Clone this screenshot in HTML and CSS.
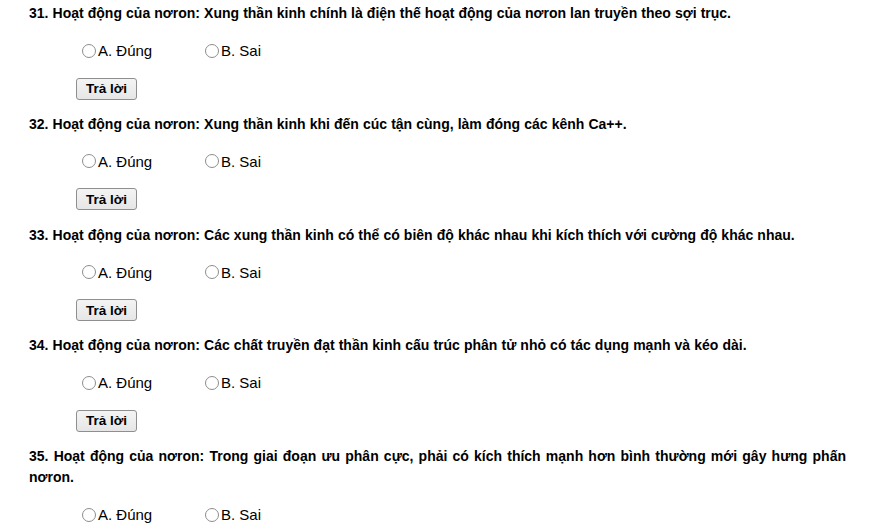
FILE: index.html
```html
<!DOCTYPE html>
<html lang="vi">
<head>
<meta charset="utf-8">
<title>Quiz</title>
<link rel="stylesheet" href="styles.css">
</head>
<body>
<div class="quiz">
  <section class="item">
    <p class="question">31. Hoạt động của nơron: Xung thần kinh chính là điện thế hoạt động của nơron lan truyền theo sợi trục.</p>
    <div class="options">
      <label class="option"><span class="radio"></span>A. Đúng</label>
      <label class="option"><span class="radio"></span>B. Sai</label>
    </div>
    <button class="answer">Trả lời</button>
  </section>
  <section class="item">
    <p class="question">32. Hoạt động của nơron: Xung thần kinh khi đến cúc tận cùng, làm đóng các kênh Ca++.</p>
    <div class="options">
      <label class="option"><span class="radio"></span>A. Đúng</label>
      <label class="option"><span class="radio"></span>B. Sai</label>
    </div>
    <button class="answer">Trả lời</button>
  </section>
  <section class="item">
    <p class="question">33. Hoạt động của nơron: Các xung thần kinh có thể có biên độ khác nhau khi kích thích với cường độ khác nhau.</p>
    <div class="options">
      <label class="option"><span class="radio"></span>A. Đúng</label>
      <label class="option"><span class="radio"></span>B. Sai</label>
    </div>
    <button class="answer">Trả lời</button>
  </section>
  <section class="item">
    <p class="question">34. Hoạt động của nơron: Các chất truyền đạt thần kinh cấu trúc phân tử nhỏ có tác dụng mạnh và kéo dài.</p>
    <div class="options">
      <label class="option"><span class="radio"></span>A. Đúng</label>
      <label class="option"><span class="radio"></span>B. Sai</label>
    </div>
    <button class="answer">Trả lời</button>
  </section>
  <section class="item">
    <p class="question">35. Hoạt động của nơron: Trong giai đoạn ưu phân cực, phải có kích thích mạnh hơn bình thường mới gây hưng phấn nơron.</p>
    <div class="options">
      <label class="option"><span class="radio"></span>A. Đúng</label>
      <label class="option"><span class="radio"></span>B. Sai</label>
    </div>
    <button class="answer">Trả lời</button>
  </section>
</div>
</body>
</html>
```
FILE: styles.css
```css
html, body {
  margin: 0;
  padding: 0;
  background: #ffffff;
}
body {
  font-family: "Liberation Sans", Arial, sans-serif;
  color: #000000;
}
.quiz {
  padding: 3px 26px 0 29px;
}
.item {
  display: flex;
  flex-direction: column;
  align-items: flex-start;
  margin-bottom: 14.25px;
}
.question {
  margin: 0;
  width: 100%;
  font-size: 14px;
  font-weight: bold;
  line-height: 21px;
  word-spacing: 0.2px;
  text-align: justify;
}
.options {
  display: flex;
  margin-top: 16.5px;
  padding-left: 53px;
  height: 20px;
  align-items: center;
  font-size: 15px;
}
.option {
  display: flex;
  align-items: center;
  width: 123px;
}
.radio {
  box-sizing: border-box;
  width: 14px;
  height: 14px;
  border: 1px solid #8d8d8d;
  border-radius: 50%;
  margin-right: 2px;
  background: #ffffff;
}
.answer {
  margin: 17px 0 0 47px;
  box-sizing: border-box;
  width: 61px;
  height: 22px;
  padding: 0;
  font-family: "Liberation Sans", Arial, sans-serif;
  font-size: 13.5px;
  font-weight: bold;
  color: #000000;
  background: linear-gradient(#f4f4f4, #e6e6e6);
  border: 1px solid #8f8f8f;
  border-radius: 3px;
}
```
